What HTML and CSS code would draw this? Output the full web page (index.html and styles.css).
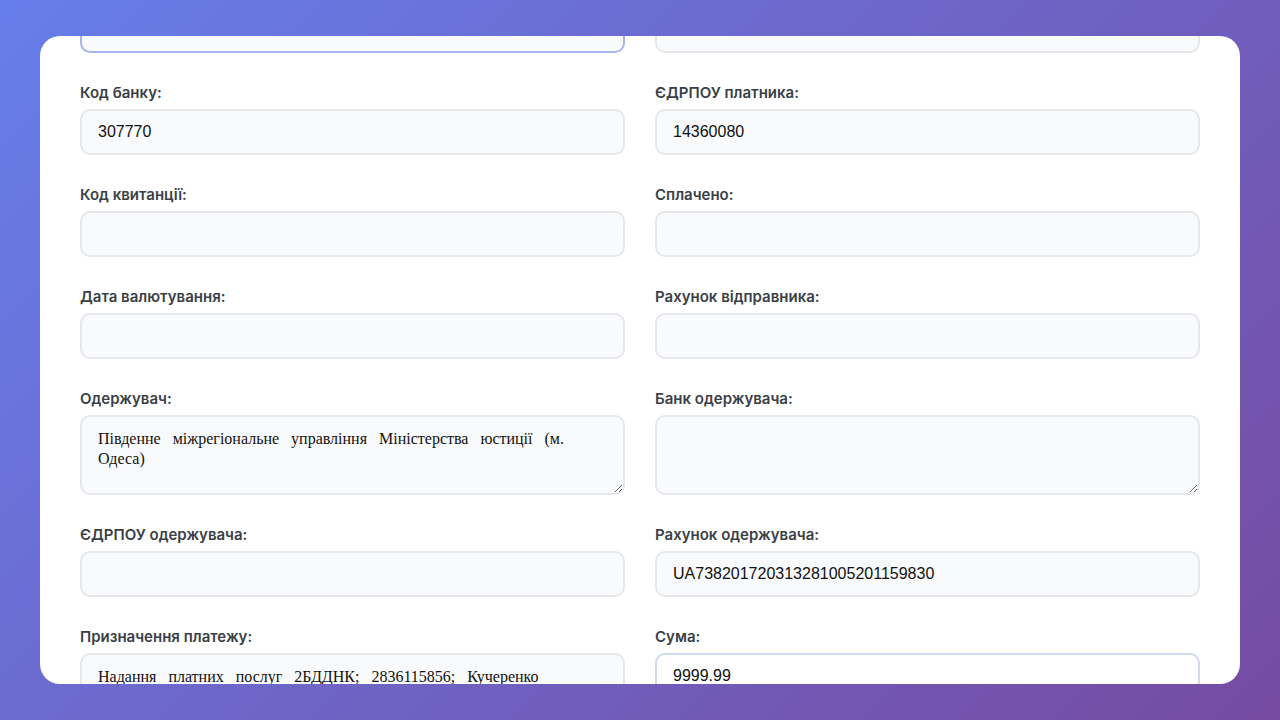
FILE: index.html
```html
<!DOCTYPE html>
<html lang="uk">
<head>
<meta charset="utf-8">
<title>Платіжна інструкція</title>
<link rel="stylesheet" href="styles.css">
</head>
<body>
<main class="card">
  <form class="form-grid">
    <div class="field">
      <label class="field-label">Платник:</label>
      <input class="field-input is-focused" type="text" value="">
    </div>
    <div class="field">
      <label class="field-label">Банк платника:</label>
      <input class="field-input" type="text" value="">
    </div>

    <div class="field">
      <label class="field-label">Код банку:</label>
      <input class="field-input" type="text" value="307770">
    </div>
    <div class="field">
      <label class="field-label">ЄДРПОУ платника:</label>
      <input class="field-input" type="text" value="14360080">
    </div>

    <div class="field">
      <label class="field-label">Код квитанції:</label>
      <input class="field-input" type="text" value="">
    </div>
    <div class="field">
      <label class="field-label">Сплачено:</label>
      <input class="field-input" type="text" value="">
    </div>

    <div class="field">
      <label class="field-label">Дата валютування:</label>
      <input class="field-input" type="text" value="">
    </div>
    <div class="field">
      <label class="field-label">Рахунок відправника:</label>
      <input class="field-input" type="text" value="">
    </div>

    <div class="field">
      <label class="field-label">Одержувач:</label>
      <textarea class="field-textarea">Південне міжрегіональне управління Міністерства юстиції (м. Одеса)</textarea>
    </div>
    <div class="field">
      <label class="field-label">Банк одержувача:</label>
      <textarea class="field-textarea"></textarea>
    </div>

    <div class="field">
      <label class="field-label">ЄДРПОУ одержувача:</label>
      <input class="field-input" type="text" value="">
    </div>
    <div class="field">
      <label class="field-label">Рахунок одержувача:</label>
      <input class="field-input" type="text" value="UA738201720313281005201159830">
    </div>

    <div class="field">
      <label class="field-label">Призначення платежу:</label>
      <textarea class="field-textarea">Надання платних послуг 2БДДНК; 2836115856; Кучеренко</textarea>
    </div>
    <div class="field">
      <label class="field-label">Сума:</label>
      <input class="field-input is-hover" type="text" value="9999.99">
    </div>
  </form>
</main>
</body>
</html>
```

FILE: styles.css
```css
* {
  box-sizing: border-box;
}

html, body {
  height: 100%;
}

body {
  margin: 0;
  padding: 36px 40px;
  background: linear-gradient(135deg, #667eea 0%, #764ba2 100%);
  font-family: "Inter", "Liberation Sans", sans-serif;
  overflow: hidden;
}

.card {
  height: 648px;
  background: #ffffff;
  border-radius: 20px;
  overflow: hidden;
  padding: 0 40px;
}

.form-grid {
  display: grid;
  grid-template-columns: 1fr 1fr;
  column-gap: 30px;
  row-gap: 28px;
  margin-top: -57px;
}

.field {
  display: flex;
  flex-direction: column;
}

.field-label {
  font-size: 15px;
  line-height: 24px;
  font-weight: 600;
  color: #3a3f47;
  margin-bottom: 4px;
}

.field-input,
.field-textarea {
  width: 100%;
  border: 2px solid #e5e7eb;
  border-radius: 10px;
  background: #f9fafb;
  padding: 12px 16px;
  font-size: 16px;
  color: #111111;
  margin: 0;
  outline: none;
}

.field-input {
  height: 46px;
  font-family: "Liberation Sans", Arial, sans-serif;
}

.field-textarea {
  height: 80px;
  font-family: "Liberation Serif", "Times New Roman", serif;
  word-spacing: 8px;
  line-height: 20px;
  padding-top: 12px;
}

.field-input.is-focused {
  border-color: #a7b5f2;
}

.field-input.is-hover {
  border-color: #d3d9ec;
  background: #ffffff;
}
```
